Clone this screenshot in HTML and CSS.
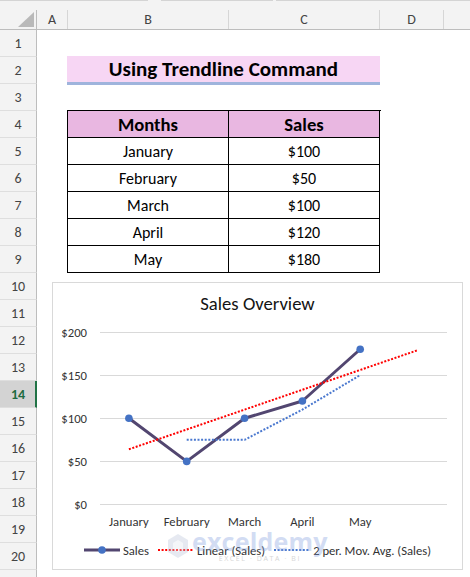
FILE: index.html
```html
<!DOCTYPE html>
<html>
<head>
<meta charset="utf-8">
<link rel="stylesheet" href="styles.css">
</head>
<body>
<div class="app">
  <div class="colhead">
    <div class="topline"><span class="seg s1"></span><span class="gap g1"></span><span class="seg s2"></span><span class="gap g2"></span><span class="seg s3"></span></div>
    <div class="cols">
      <div class="corner"><svg class="tri" width="16" height="15" viewBox="0 0 16 15"><polygon points="16,0 16,15 0,15" fill="#b9b9b9"/></svg></div>
      <div class="ch cA">A</div>
      <div class="ch cB">B</div>
      <div class="ch cC">C</div>
      <div class="ch cD">D</div>
      <div class="ch cE"></div>
    </div>
  </div>
  <div class="main">
    <div class="rowhead">
      <div class="rh">1</div><div class="rh">2</div><div class="rh">3</div><div class="rh">4</div><div class="rh">5</div>
      <div class="rh">6</div><div class="rh">7</div><div class="rh">8</div><div class="rh">9</div><div class="rh">10</div>
      <div class="rh">11</div><div class="rh">12</div><div class="rh">13</div><div class="rh sel">14</div><div class="rh">15</div>
      <div class="rh">16</div><div class="rh">17</div><div class="rh">18</div><div class="rh">19</div><div class="rh">20</div>
      <div class="rh"></div>
    </div>
    <div class="cells">
      <div class="title">Using Trendline Command</div>
      <div class="tbl">
        <div class="td th">Months</div><div class="td th">Sales</div>
        <div class="td">January</div><div class="td">$100</div>
        <div class="td">February</div><div class="td">$50</div>
        <div class="td">March</div><div class="td">$100</div>
        <div class="td">April</div><div class="td">$120</div>
        <div class="td">May</div><div class="td">$180</div>
      </div>
      <div class="chart">
        <div class="ctitle">Sales Overview</div>
        <svg class="plot" width="409" height="215" viewBox="53 320 409 215">
          <g stroke="#d9d9d9" stroke-width="1">
            <line x1="100" y1="332.5" x2="447" y2="332.5"/>
            <line x1="100" y1="375.5" x2="447" y2="375.5"/>
            <line x1="100" y1="418.5" x2="447" y2="418.5"/>
            <line x1="100" y1="461.5" x2="447" y2="461.5"/>
            <line x1="100" y1="504.5" x2="447" y2="504.5"/>
          </g>
          <g class="ylab" text-anchor="end">
            <text x="87" y="336.5">$200</text>
            <text x="87" y="379.5">$150</text>
            <text x="87" y="422.5">$100</text>
            <text x="87" y="465.5">$50</text>
            <text x="87" y="508.5">$0</text>
          </g>
          <g class="xlab" text-anchor="middle">
            <text x="128.9" y="526">January</text>
            <text x="186.7" y="526">February</text>
            <text x="244.6" y="526">March</text>
            <text x="302.4" y="526">April</text>
            <text x="360.2" y="526">May</text>
          </g>
          <polyline points="128.9,418.25 186.7,461.4 244.6,418.25 302.4,401 360.2,349.25" fill="none" stroke="#524670" stroke-width="3" stroke-linejoin="round"/>
          <line x1="128.9" y1="449.3" x2="418" y2="350.1" stroke="#ff0000" stroke-width="2" stroke-dasharray="2 1.6"/>
          <polyline points="186.7,439.8 244.6,439.8 302.4,409.6 360.2,375.1" fill="none" stroke="#4a78cf" stroke-width="2" stroke-dasharray="2 1.6"/>
          <g fill="#4472c4">
            <circle cx="128.9" cy="418.25" r="3.8"/>
            <circle cx="186.7" cy="461.4" r="3.8"/>
            <circle cx="244.6" cy="418.25" r="3.8"/>
            <circle cx="302.4" cy="401" r="3.8"/>
            <circle cx="360.2" cy="349.25" r="3.8"/>
          </g>
        </svg>
        <div class="legend">
          <div class="li"><svg width="36" height="10" viewBox="0 0 36 10"><line x1="0" y1="5" x2="36" y2="5" stroke="#524670" stroke-width="3"/><circle cx="18" cy="5" r="3.8" fill="#4472c4"/></svg><span>Sales</span></div>
          <div class="li"><svg width="36" height="10" viewBox="0 0 36 10"><line x1="0" y1="5" x2="36" y2="5" stroke="#ff0000" stroke-width="2" stroke-dasharray="2 1.6"/></svg><span>Linear (Sales)</span></div>
          <div class="li"><svg width="36" height="10" viewBox="0 0 36 10"><line x1="0" y1="5" x2="36" y2="5" stroke="#4a78cf" stroke-width="2" stroke-dasharray="2 1.6"/></svg><span>2 per. Mov. Avg. (Sales)</span></div>
        </div>
        <div class="wm">
          <svg class="wm-hex" width="20" height="24" viewBox="0 0 20 24"><polygon points="10,0 20,6 20,18 10,24 0,18 0,6" fill="#b8c3d9"/><polygon points="10,6 15,9 15,15 10,18 5,15 5,9" fill="#e2e7f0"/></svg>
          <div class="wm-text"><span class="wm-name">exceldemy</span><span class="wm-sub">EXCEL · DATA · BI</span></div>
        </div>
      </div>
    </div>
  </div>
</div>
</body>
</html>
```
FILE: styles.css
```css
html, body {
  margin: 0;
  padding: 0;
  background: #ffffff;
  overflow: hidden;
}
body {
  width: 470px;
  height: 577px;
  font-family: Carlito, Calibri, Lato, "Liberation Sans", sans-serif;
  color: #000;
}
.app {
  width: 470px;
  height: 577px;
  overflow: hidden;
}
.colhead {
  height: 29px;
  border-bottom: 1px solid #bdbdbd;
  background: #f3f3f3;
  display: flex;
  flex-direction: column;
}
.topline {
  height: 1px;
  display: flex;
}
.seg { background: #d4d4d4; height: 1px; }
.s1 { width: 148px; }
.g1 { width: 13px; }
.s2 { width: 112px; }
.g2 { width: 3px; }
.s3 { flex: 1; }
.cols {
  margin-top: 9px;
  height: 19px;
  display: flex;
}
.corner {
  width: 37px;
  box-sizing: border-box;
  border-right: 1px solid #bdbdbd;
  display: flex;
  justify-content: flex-end;
  align-items: flex-end;
  padding: 0 2px 2px 0;
}
.ch {
  box-sizing: border-box;
  border-right: 1px solid #d6d6d6;
  display: flex;
  align-items: center;
  justify-content: center;
  font-size: 14px;
  color: #444;
}
.cA { width: 31px; }
.cB { width: 161px; }
.cC { width: 151px; }
.cD { width: 64px; }
.cE { flex: 1; border-right: none; }
.main {
  display: flex;
}
.rowhead {
  width: 37px;
  background: #f3f3f3;
  display: flex;
  flex-direction: column;
}
.rh {
  height: 27px;
  flex: none;
  box-sizing: border-box;
  border-bottom: 1px solid #dedede;
  border-right: 1px solid #bdbdbd;
  display: flex;
  align-items: center;
  justify-content: center;
  font-size: 14px;
  color: #444;
}
.rh.sel {
  background: #d3d3d3;
  color: #1e6b41;
  font-weight: bold;
  border-right: 2px solid #217346;
  padding-left: 1px;
}
.cells {
  flex: 1;
  position: relative;
  background: #fff;
}
.title {
  margin: 26px 0 0 30px;
  width: 313px;
  height: 26px;
  background: #f7d6f4;
  border-bottom: 3px solid #9fb4dc;
  text-align: center;
  line-height: 26px;
  font-size: 21px;
  font-weight: bold;
}
.tbl {
  margin: 25px 0 0 30px;
  width: 313px;
  display: grid;
  grid-template-columns: 161px 151px;
  border-left: 1px solid #000;
  border-top: 1px solid #000;
}
.td {
  height: 27px;
  box-sizing: border-box;
  border-right: 1px solid #000;
  border-bottom: 1px solid #000;
  display: flex;
  align-items: center;
  justify-content: center;
  font-size: 16px;
}
.th {
  background: #e9b7e1;
  font-weight: bold;
  font-size: 18.67px;
}
.chart {
  position: absolute;
  left: 15px;
  top: 252px;
  width: 411px;
  height: 288px;
  box-sizing: border-box;
  border: 1px solid #d9d9d9;
  background: #fff;
  display: flex;
  flex-direction: column;
}
.ctitle {
  height: 37px;
  box-sizing: border-box;
  padding-top: 4px;
  line-height: 33px;
  text-align: center;
  font-size: 18.67px;
  color: #141414;
}
.plot {
  display: block;
  flex: none;
}
.ylab, .xlab {
  font-size: 12.67px;
  fill: #333;
}
.legend {
  height: 28px;
  margin-top: 1px;
  display: flex;
  align-items: center;
  justify-content: center;
  gap: 9px;
  font-size: 12.67px;
  color: #333;
}
.li {
  display: flex;
  align-items: center;
  gap: 3px;
}
.li svg { display: block; }
.wm {
  position: absolute;
  left: 115px;
  top: 246px;
  display: flex;
  align-items: center;
  gap: 4px;
  opacity: 0.35;
  pointer-events: none;
}
.wm-hex { display: block; }
.wm-text {
  display: flex;
  flex-direction: column;
  align-items: center;
  line-height: 1;
}
.wm-name {
  font-family: "Open Sans", sans-serif;
  font-weight: bold;
  font-size: 25px;
  color: #7f9ddd;
  letter-spacing: 0.2px;
}
.wm-sub {
  font-family: "Open Sans", sans-serif;
  font-size: 7px;
  letter-spacing: 1.6px;
  color: #8a8a8a;
  margin-top: 1px;
}
```
